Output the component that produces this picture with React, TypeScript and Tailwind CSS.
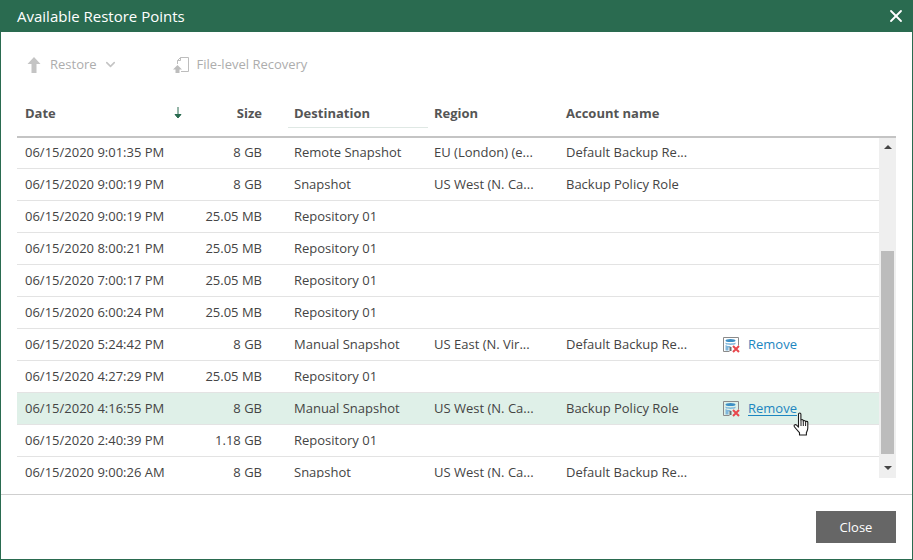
import { ChevronDown, X } from "lucide-react";

type Row = {
  date: string;
  size: string;
  destination: string;
  region?: string;
  account?: string;
  removable?: boolean;
  active?: boolean;
};

const rows: Row[] = [
  { date: "06/15/2020 9:01:35 PM", size: "8 GB", destination: "Remote Snapshot", region: "EU (London) (e...", account: "Default Backup Re..." },
  { date: "06/15/2020 9:00:19 PM", size: "8 GB", destination: "Snapshot", region: "US West (N. Ca...", account: "Backup Policy Role" },
  { date: "06/15/2020 9:00:19 PM", size: "25.05 MB", destination: "Repository 01" },
  { date: "06/15/2020 8:00:21 PM", size: "25.05 MB", destination: "Repository 01" },
  { date: "06/15/2020 7:00:17 PM", size: "25.05 MB", destination: "Repository 01" },
  { date: "06/15/2020 6:00:24 PM", size: "25.05 MB", destination: "Repository 01" },
  { date: "06/15/2020 5:24:42 PM", size: "8 GB", destination: "Manual Snapshot", region: "US East (N. Vir...", account: "Default Backup Re...", removable: true },
  { date: "06/15/2020 4:27:29 PM", size: "25.05 MB", destination: "Repository 01" },
  { date: "06/15/2020 4:16:55 PM", size: "8 GB", destination: "Manual Snapshot", region: "US West (N. Ca...", account: "Backup Policy Role", removable: true, active: true },
  { date: "06/15/2020 2:40:39 PM", size: "1.18 GB", destination: "Repository 01" },
  { date: "06/15/2020 9:00:26 AM", size: "8 GB", destination: "Snapshot", region: "US West (N. Ca...", account: "Default Backup Re..." },
];

function RestoreArrow() {
  return (
    <svg width="14" height="16" viewBox="0 0 14 16" className="shrink-0">
      <path d="M7 0L13.500 7H9.500V16H4.500V7H.5z" fill="#c4c4c4" />
    </svg>
  );
}

function FileRecoveryIcon() {
  return (
    <svg width="16" height="16" viewBox="0 0 16 16" fill="none" className="shrink-0">
      <path d="M4.500 7V3.500L7.500.5h8v14H8" stroke="#bdbdbd" strokeWidth="1" />
      <path d="M7.500.5v3h-3" stroke="#bdbdbd" strokeWidth="1" />
      <path d="M4.500 8L0 12.500h2.500V16h4v-3.500H9z" fill="#bdbdbd" />
    </svg>
  );
}

function RemoveIcon() {
  return (
    <svg width="17" height="16" viewBox="0 0 17 16" fill="none" className="shrink-0">
      <path d="M.5 14.500V.5h15v8" stroke="#8a8a8a" strokeWidth="1" />
      <path d="M.5 14.500h6" stroke="#8a8a8a" strokeWidth="1" />
      <ellipse cx="7.500" cy="3.500" rx="5" ry="1.600" fill="#3d8fc4" />
      <path d="M2.500 5.500c2 1.200 8 1.200 10 0v1.500c-2 1.200-8 1.200-10 0z" fill="#7fb6da" />
      <path d="M2.500 8c1.500 1 3 1.100 5 1.100v1.400H5.500v3H2.500z" fill="#7fb6da" />
      <rect x="6.500" y="10" width="2" height="4" fill="#6d6d6d" />
      <path d="M10 9l6 6M16 9l-6 6" stroke="#e8474c" strokeWidth="2" />
    </svg>
  );
}

function HandCursor() {
  return (
    <svg width="18" height="25" viewBox="0 0 18 25" className="absolute left-[792px] top-[412px]">
      <path
        d="M5.500 2.200c0-1.600 2.400-1.600 2.400 0v6.300c0-1.300 2.300-1.300 2.300 0v1c0-1.300 2.300-1.300 2.300 0v.8c0-1.200 2.300-1.200 2.300 0v5.700c0 2.200-.8 3.400-1.400 4.600v2.400H6.500v-2.300C5 19 3.500 17.500 1.600 15c-1.300-1.800.7-3.100 2-1.800l1.900 1.900z"
        fill="#fff"
        stroke="#1c1c1c"
        strokeWidth="1.100"
        strokeLinejoin="round"
      />
      <path d="M8 9v5M10.300 10v4M12.600 10.500V14" stroke="#1c1c1c" strokeWidth="1" />
    </svg>
  );
}

function TableRow({ row }: { row: Row }) {
  return (
    <div className={"flex h-8 shrink-0 items-center border-b border-[#e3e3e3] text-[13px] text-[#444] " + (row.active ? "bg-[#dff0e8]" : "")}>
      <div className="w-[170px] whitespace-nowrap pl-2">{row.date}</div>
      <div className="w-[75px] whitespace-nowrap text-right">{row.size}</div>
      <div className="w-[172px] whitespace-nowrap pl-[32px]">{row.destination}</div>
      <div className="w-[132px] whitespace-nowrap">{row.region}</div>
      <div className="w-[157px] whitespace-nowrap">{row.account}</div>
      {row.removable && (
        <div className="flex items-center gap-[8px]">
          <RemoveIcon />
          <span className={"text-[#1d86c0] " + (row.active ? "underline underline-offset-2" : "")}>Remove</span>
        </div>
      )}
    </div>
  );
}

export default function App() {
  return (
    <div className="relative flex h-[560px] w-[913px] flex-col overflow-hidden border border-t-0 border-[#2a6b50] bg-white font-['Open_Sans',sans-serif]">
      <div className="flex h-8 shrink-0 items-center justify-between bg-[#2a6b50] pl-4 pr-[6px] text-[15px] text-white">
        <span>Available Restore Points</span>
        <X size={20} strokeWidth={2.2} />
      </div>

      <div className="flex h-[65px] shrink-0 items-center pl-[26px] text-[13px] text-[#adadad]">
        <RestoreArrow />
        <span className="ml-[9px]">Restore</span>
        <ChevronDown size={15} strokeWidth={2.5} className="ml-[6px] text-[#c4c4c4]" />
        <div className="ml-[55px] flex items-center gap-[8px]">
          <FileRecoveryIcon />
          <span>File-level Recovery</span>
        </div>
      </div>

      <div className="ml-4 mr-4 flex h-[41px] shrink-0 items-start border-b-2 border-[#c4c4c4] pt-[7px] text-[13px] font-bold text-[#555]">
        <div className="flex w-[170px] items-center justify-between pl-2 pr-[5px]">
          <span>Date</span>
          <svg width="8" height="12" viewBox="0 0 8 12" className="mb-[2px]">
            <path d="M4 0v10M1 7.500L4 11l3-3.500z" stroke="#2a6b50" strokeWidth="1" fill="#2a6b50" />
          </svg>
        </div>
        <div className="w-[75px] text-right">Size</div>
        <div className="ml-[26px] h-[24px] w-[140px] border-b border-[#dfe8e4] pl-[6px]">Destination</div>
        <div className="ml-[6px] w-[132px]">Region</div>
        <div className="w-[157px]">Account name</div>
      </div>

      <div className="ml-4 mr-4 flex h-[340px] shrink-0">
        <div className="-mt-px flex min-w-0 flex-1 flex-col overflow-hidden">
          {rows.map((row, i) => (
            <TableRow key={i} row={row} />
          ))}
        </div>
        <div className="flex w-[17px] shrink-0 flex-col items-center bg-[#efefef]">
          <div className="mt-[7px] h-0 w-0 border-x-[4px] border-b-[4px] border-x-transparent border-b-[#444]" />
          <div className="mt-[102px] h-[203px] w-[13px] bg-[#bcbcbc]" />
          <div className="mt-[12px] h-0 w-0 border-x-[4px] border-t-[4px] border-x-transparent border-t-[#444]" />
        </div>
      </div>

      <div className="mt-4 flex flex-1 justify-end border-t border-[#cfcfcf] pr-4 pt-[16px]">
        <button className="h-8 w-20 bg-[#666] pt-px text-[13px] text-white">Close</button>
      </div>
      <HandCursor />
    </div>
  );
}
